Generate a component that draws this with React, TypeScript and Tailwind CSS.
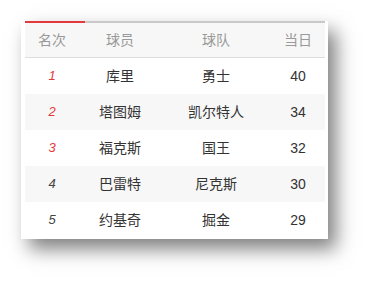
const rows = [
  { rank: 1, player: '库里', team: '勇士', score: 40 },
  { rank: 2, player: '塔图姆', team: '凯尔特人', score: 34 },
  { rank: 3, player: '福克斯', team: '国王', score: 32 },
  { rank: 4, player: '巴雷特', team: '尼克斯', score: 30 },
  { rank: 5, player: '约基奇', team: '掘金', score: 29 },
];

const cols = 'grid grid-cols-[54px_82px_110px_54px] text-center items-center';

export default function App() {
  return (
    <div className="w-[370px] h-[281px] bg-white pt-[21px] pl-[21px]" style={{ fontFamily: '"Liberation Sans", "Noto Sans CJK SC", sans-serif' }}>
      <div className="w-[307px] bg-white pl-[4px] pr-[3px] pb-[1px] shadow-[8px_10px_18px_rgba(0,0,0,0.5)]">
        <div className="flex h-[2px]">
          <div className="w-[60px] bg-[#e4393c]" />
          <div className="flex-1 bg-[#c9c9c9]" />
        </div>
        <div className={`${cols} h-[35px] bg-[#f7f7f7] border-b border-[#dddddd] text-[14px] text-[#999999]`}>
          <div>名次</div>
          <div>球员</div>
          <div>球队</div>
          <div>当日</div>
        </div>
        {rows.map((r, i) => (
          <div key={r.rank} className={`${cols} h-[36px] text-[14px] text-[#333333] ${i % 2 === 1 ? 'bg-[#f7f7f7]' : 'bg-white'}`}>
            <div className={`italic text-[13px] ${r.rank <= 3 ? 'text-[#e4393c]' : 'text-[#444444]'}`}>{r.rank}</div>
            <div>{r.player}</div>
            <div>{r.team}</div>
            <div>{r.score}</div>
          </div>
        ))}
      </div>
    </div>
  );
}
